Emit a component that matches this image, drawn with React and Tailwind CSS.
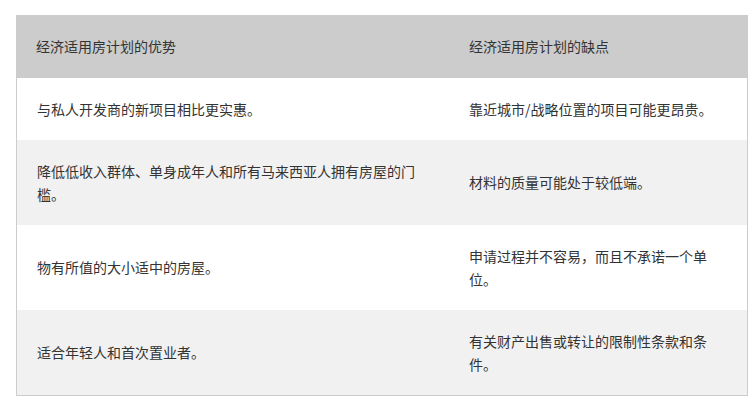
import React from "react";

const ROWS = [
  {
    pro: "与私人开发商的新项目相比更实惠。",
    con: "靠近城市/战略位置的项目可能更昂贵。",
  },
  {
    pro: "降低低收入群体、单身成年人和所有马来西亚人拥有房屋的门槛。",
    con: "材料的质量可能处于较低端。",
  },
  {
    pro: "物有所值的大小适中的房屋。",
    con: "申请过程并不容易，而且不承诺一个单位。",
  },
  {
    pro: "适合年轻人和首次置业者。",
    con: "有关财产出售或转让的限制性条款和条件。",
  },
];

function App() {
  return (
    <div
      className="bg-white w-[756px] h-[401px] pt-[15px] pl-[16px] text-[14px] leading-[22.5px] text-[#333333]"
      style={{ fontFamily: '"Noto Sans CJK SC", "Noto Sans", sans-serif' }}
    >
      <div className="w-[732px]">
        <div className="grid grid-cols-[433px_299px] bg-[#cccccc]">
          <div className="px-[20px] py-[20px] flex items-center">经济适用房计划的优势</div>
          <div className="px-[20px] py-[20px] flex items-center">经济适用房计划的缺点</div>
        </div>
        <div className="border-l border-r border-b border-[#cccccc]">
          {ROWS.map((row, i) => (
            <div
              key={i}
              className={
                "grid grid-cols-[432px_298px] " +
                (i % 2 === 0 ? "bg-white" : "bg-[#f1f1f1]")
              }
            >
              <div className="px-[20px] py-[20px] flex items-center">{row.pro}</div>
              <div className="px-[20px] py-[20px] flex items-center">{row.con}</div>
            </div>
          ))}
        </div>
      </div>
    </div>
  );
}

export default App;
